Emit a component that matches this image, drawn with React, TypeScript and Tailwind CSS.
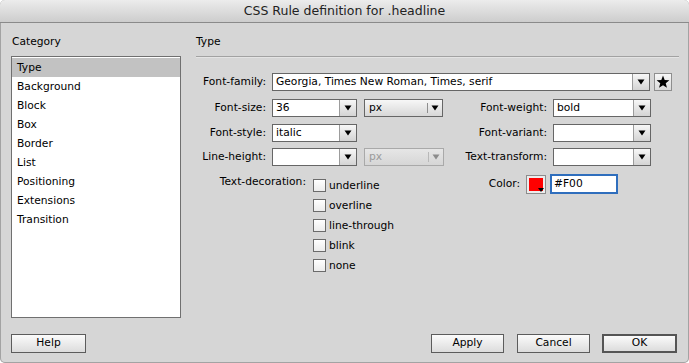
import React from "react";

function Tri({ color = "#000" }: { color?: string }) {
  return (
    <svg width="8" height="6" viewBox="0 0 8 6">
      <polygon points="0.5,0.5 7.5,0.5 4,5.5" fill={color} />
    </svg>
  );
}

function Select({ className, value }: { className: string; value?: string }) {
  return (
    <div className={`flex h-[18px] border border-[#666666] bg-white ${className}`}>
      <div className="flex-1 overflow-hidden whitespace-nowrap pl-[3px] leading-[16px]">{value}</div>
      <div className="flex w-[17px] items-center justify-center border-l border-[#9c9c9c] bg-gradient-to-b from-[#f7f7f7] to-[#d4d4d4]">
        <Tri />
      </div>
    </div>
  );
}

function Popup({ className, value, disabled }: { className: string; value: string; disabled?: boolean }) {
  return (
    <div
      className={`flex h-[18px] items-center border bg-gradient-to-b ${
        disabled
          ? "border-[#a9a9a9] from-[#e6e6e6] to-[#d6d6d6] text-[#9a9a9a]"
          : "border-[#666666] from-[#f7f7f7] to-[#d7d7d7] text-black"
      } ${className}`}
    >
      <div className="flex-1 pl-[4px] leading-[16px]">{value}</div>
      <div className={`h-[10px] w-px ${disabled ? "bg-[#b8b8b8]" : "bg-[#8e8e8e]"}`} />
      <div className="flex w-[14px] items-center justify-center">
        <Tri color={disabled ? "#8c8c8c" : "#000"} />
      </div>
    </div>
  );
}

function Check({ label }: { label: string }) {
  return (
    <div className="flex h-[20px] items-start">
      <div className="mt-0 h-[13px] w-[13px] border border-[#6b6b6b] bg-gradient-to-b from-[#ffffff] to-[#ececec]" />
      <div className="ml-[3px] leading-[13px]">{label}</div>
    </div>
  );
}

function Btn({ className, label, def }: { className: string; label: string; def?: boolean }) {
  return (
    <div
      className={`flex h-[19px] items-center justify-center bg-gradient-to-b from-[#fbfbfb] to-[#dcdcdc] ${
        def ? "border-2 border-[#555555]" : "border border-[#5c5c5c]"
      } ${className}`}
    >
      {label}
    </div>
  );
}

export default function App() {
  const cats = ["Type", "Background", "Block", "Box", "Border", "List", "Positioning", "Extensions", "Transition"];
  return (
    <div className="flex h-[363px] w-[689px] flex-col overflow-hidden rounded-[5px] bg-[#d6d6d6] font-['DejaVu_Sans','Liberation_Sans',sans-serif] text-[10.7px] text-black shadow-[inset_0_0_0_1px_#a3a3a3]">
      <div className="flex h-[23px] shrink-0 items-center justify-center border-b border-[#8a8a8a] bg-gradient-to-b from-[#ececec] to-[#cdcdcd] text-[12.5px] text-[#222222]">
        CSS Rule definition for .headline
      </div>

      <div className="flex flex-1 flex-col">
        <div className="flex pl-[11px] pt-[10px]">
          {/* Category column */}
          <div className="flex w-[170px] flex-col">
            <div className="flex h-[18px] items-center pl-[1px]">Category</div>
            <div className="mt-[5px] h-[262px] border border-[#707070] bg-white pt-[1px]">
              {cats.map((c, i) => (
                <div
                  key={c}
                  className={`flex h-[19px] items-center pl-[5px] pt-[1px] ${i === 0 ? "bg-[#c2c2c2]" : ""}`}
                >
                  {c}
                </div>
              ))}
            </div>
          </div>

          {/* Type panel */}
          <div className="ml-[15px] flex w-[483px] flex-col">
            <div className="flex h-[18px] items-center">Type</div>
            <div className="mt-[5px] border-t border-[#a2a2a2]" />
            <div className="border-t border-[#e4e4e4]" />

            {/* Row 1 */}
            <div className="mt-[15px] flex h-[18px] items-center">
              <div className="w-[70px] text-right">Font-family:</div>
              <Select className="ml-[6px] w-[378px]" value="Georgia, Times New Roman, Times, serif" />
              <div className="ml-[4px] flex h-[18px] w-[18px] items-center justify-center border border-[#8e8e8e] bg-gradient-to-b from-[#f7f7f7] to-[#dadada]">
                <svg width="14" height="14" viewBox="0 0 24 24">
                  <polygon
                    points="12,1 14.9,8.6 23,9 16.7,14.1 18.8,22 12,17.5 5.2,22 7.3,14.1 1,9 9.1,8.6"
                    fill="#000"
                  />
                </svg>
              </div>
            </div>

            {/* Row 2 */}
            <div className="mt-[8px] flex h-[18px] items-center">
              <div className="w-[70px] text-right">Font-size:</div>
              <Select className="ml-[6px] w-[85px]" value="36" />
              <Popup className="ml-[7px] w-[79px]" value="px" />
              <div className="w-[104px] text-right">Font-weight:</div>
              <Select className="ml-[6px] w-[98px]" value="bold" />
            </div>

            {/* Row 3 */}
            <div className="mt-[7px] flex h-[18px] items-center">
              <div className="w-[70px] text-right">Font-style:</div>
              <Select className="ml-[6px] w-[85px]" value="italic" />
              <div className="w-[86px]" />
              <div className="w-[104px] text-right">Font-variant:</div>
              <Select className="ml-[6px] w-[98px]" value="" />
            </div>

            {/* Row 4 */}
            <div className="mt-[6px] flex h-[18px] items-center">
              <div className="w-[70px] text-right">Line-height:</div>
              <Select className="ml-[6px] w-[85px]" value="" />
              <Popup className="ml-[7px] w-[80px]" value="px" disabled />
              <div className="w-[103px] text-right">Text-transform:</div>
              <Select className="ml-[6px] w-[98px]" value="" />
            </div>

            {/* Row 5 */}
            <div className="mt-[8px] flex">
              <div className="flex w-[248px]">
                <div className="w-[110px] pt-[1px] text-right leading-[14px]">Text-decoration:</div>
                <div className="ml-[7px] flex flex-col pt-[5px]">
                  <Check label="underline" />
                  <Check label="overline" />
                  <Check label="line-through" />
                  <Check label="blink" />
                  <Check label="none" />
                </div>
              </div>
              <div className="flex h-[20px] items-center">
                <div className="w-[76px] text-right">Color:</div>
                <div className="relative ml-[6px] h-[19px] w-[20px] border border-[#8c8c8c] bg-[#ececec] p-[2px]">
                  <div className="h-full w-full bg-[#ff0000]" />
                  <div className="absolute bottom-[1px] right-[1px]">
                    <svg width="6" height="4" viewBox="0 0 6 4">
                      <polygon points="0,0 6,0 3,4" fill="#000" />
                    </svg>
                  </div>
                </div>
                <div className="ml-[4px] flex h-[20px] w-[68px] items-center border-2 border-[#2f6ebd] bg-white pl-[2px]">
                  #F00
                </div>
              </div>
            </div>
          </div>
        </div>

        {/* Buttons */}
        <div className="mt-auto flex items-center pb-[10px] pl-[11px]">
          <Btn className="w-[75px]" label="Help" />
          <div className="flex-1" />
          <Btn className="w-[73px]" label="Apply" />
          <Btn className="ml-[13px] w-[73px]" label="Cancel" />
          <Btn className="ml-[12px] mr-[12px] w-[75px]" label="OK" def />
        </div>
      </div>
    </div>
  );
}
